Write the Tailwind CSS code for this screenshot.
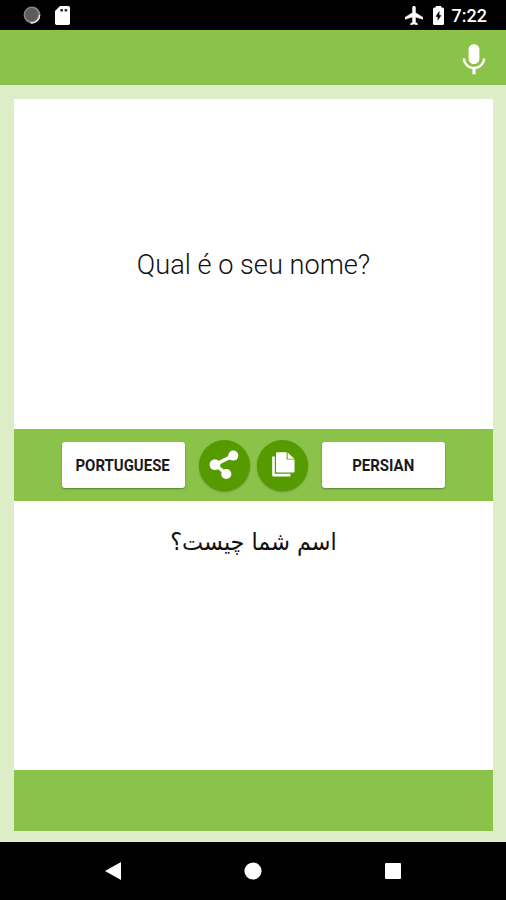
<!doctype html>
<html lang="pt">
<head>
    <meta charset="UTF-8">
    <meta name="viewport" content="width=device-width, initial-scale=1.0">
    <title>Portuguese-Persian Translator</title>
    <script src="https://cdn.jsdelivr.net/npm/@tailwindcss/browser@4"></script>
</head>
<body class="font-['Roboto',sans-serif]">
<div class="flex flex-col w-[506px] h-[900px] bg-[#dcedc8] overflow-hidden">
    <!-- status bar -->
    <div class="flex items-center h-[30px] shrink-0 bg-black pl-[23px] pr-[19px]">
        <svg class="w-[18px] h-[18px]" viewBox="0 0 18 18">
            <circle cx="9" cy="9" r="8.4" fill="#858585"/>
            <circle cx="8.6" cy="8.6" r="6.6" fill="#5c5c5c"/>
            <path d="M16.6 9A7.7 7.7 0 0 1 7.5 16.8" fill="none" stroke="#e8e8e8" stroke-width="1.4"/>
        </svg>
        <svg class="w-[15px] h-[19px] ml-[14px]" viewBox="0 0 15 19">
            <path d="M5 0h8.3Q15 0 15 1.7v15.6Q15 19 13.3 19H1.7Q0 19 0 17.3V5z" fill="#fff"/>
            <path d="M5.4 3h2.6v2.6H5.4zM9.6 3h2.6v2.6H9.6z" fill="#333"/>
        </svg>
        <div class="flex items-center ml-auto">
            <svg class="w-[18px] h-[19px]" viewBox="2 2 19 20" fill="#fff" stroke="#fff" stroke-width="0.6">
                <path d="M21 16v-2l-8-5V3.5c0-.83-.67-1.5-1.5-1.5S10 2.67 10 3.5V9l-8 5v2l8-2.5V19l-2 1.5V22l3.5-1 3.5 1v-1.5L13 19v-5.5l8 2.5z"/>
            </svg>
            <svg class="w-[11px] h-[19px] ml-2.5" viewBox="7 2 10 20" preserveAspectRatio="none" fill="#fff">
                <path d="M15.67 3.5H14.5V2h-5v1.5H8.33C7.6 3.5 7 4.3 7 5v15.66C7 21.4 7.6 22 8.33 22h7.33c.74 0 1.34-.6 1.34-1.33V5c0-.7-.6-1.5-1.33-1.5zM11.2 17.5v-4.3H9.3L12.8 7v4.8h1.9L11.2 17.5z"/>
            </svg>
            <span class="text-white text-[18px] leading-[20px] font-medium ml-2 mt-0.5">7:22</span>
        </div>
    </div>

    <!-- toolbar -->
    <div class="flex items-center justify-end h-[55px] shrink-0 bg-[#8bc34a] pr-[13px]">
        <svg class="w-[38px] h-[38px] mt-1" viewBox="0 0 24 24" fill="#fff">
            <path d="M12 14.6c1.8 0 3.4-1.4 3.4-3.2V5.2c0-1.8-1.6-3.2-3.4-3.2S8.6 3.4 8.6 5.2v6.2c0 1.8 1.6 3.2 3.4 3.2zm5.6-3.6c0 3-2.7 5.3-5.6 5.3S6.4 14 6.4 11H4.9c0 3.41 2.8 6.23 6.1 6.72V21h2v-3.28c3.28-.48 6.1-3.3 6.1-6.72h-1.5z"/>
        </svg>
    </div>

    <div class="flex flex-col flex-1 px-[13.5px] pt-[14px] pb-[10.5px] bg-[#dcedc8]">
        <!-- source text -->
        <div class="flex items-center justify-center h-[330px] pt-0.5 pl-px bg-white">
            <p class="text-[27.2px] font-light text-[#111]">Qual é o seu nome?</p>
        </div>

        <!-- language bar -->
        <div class="flex items-center justify-center h-[72px] bg-[#8bc34a]">
            <button class="flex items-center justify-center w-[123px] h-[46px] pt-0.5 bg-white rounded-[3px] shadow-[0_1px_2px_rgba(0,0,0,0.35)]">
                <span class="text-[17px] font-bold text-[#1a1a1a] scale-x-[0.88]">PORTUGUESE</span>
            </button>
            <button class="w-[51px] h-[51px] ml-[14px] rounded-full bg-[#559b00] shadow-[0_1px_2px_rgba(0,0,0,0.3)]">
                <svg class="w-[51px] h-[51px]" viewBox="0 0 51 51" fill="#fff">
                    <path d="M34.3 15.6L16 24.6 27.5 34" fill="none" stroke="#fff" stroke-width="3.4"/>
                    <circle cx="34.3" cy="15.6" r="5"/>
                    <circle cx="16" cy="24.6" r="5.4"/>
                    <circle cx="27.3" cy="34" r="5.1"/>
                </svg>
            </button>
            <button class="w-[51px] h-[51px] ml-[7px] rounded-full bg-[#559b00] shadow-[0_1px_2px_rgba(0,0,0,0.3)]">
                <svg class="w-[51px] h-[51px]" viewBox="0 0 51 51" fill="#fff">
                    <path d="M15.2 16.5h2.6v17.2h15.6v2.8H16.4q-1.2 0-1.2-1.2z"/>
                    <path d="M20.2 12.2h9.4v7.4h7.9v11.6q0 1.2-1.2 1.2H20.2q-1.2 0-1.2-1.2V13.4q0-1.2 1.2-1.2z"/>
                    <path d="M30.6 12.4l6.7 6.3h-6.7z"/>
                </svg>
            </button>
            <button class="flex items-center justify-center w-[123px] h-[46px] ml-[14px] pt-0.5 bg-white rounded-[3px] shadow-[0_1px_2px_rgba(0,0,0,0.35)]">
                <span class="text-[17px] font-bold text-[#1a1a1a] scale-x-[0.88]">PERSIAN</span>
            </button>
        </div>

        <!-- translation -->
        <div class="h-[269px] pt-[25px] text-center bg-white">
            <p class="font-['DejaVu_Sans',sans-serif] text-[24px] leading-[32px] text-[#111] scale-x-[0.93]" dir="rtl" lang="fa">اسم شما چیست؟</p>
        </div>
        <div class="h-[61px] bg-[#8bc34a]"></div>
    </div>

    <!-- navigation bar -->
    <div class="flex items-center justify-center gap-[122px] h-[58.5px] shrink-0 bg-black">
        <svg class="w-[18px] h-[18px]" viewBox="0 0 18 18" fill="#fff"><path d="M17 0v18L1 9z"/></svg>
        <svg class="w-[18px] h-[18px]" viewBox="0 0 18 18" fill="#fff"><circle cx="9" cy="9" r="8.6"/></svg>
        <svg class="w-[18px] h-[18px]" viewBox="0 0 18 18" fill="#fff"><rect x="1" y="1" width="16" height="16" rx="1"/></svg>
    </div>
</div>
</body>
</html>
